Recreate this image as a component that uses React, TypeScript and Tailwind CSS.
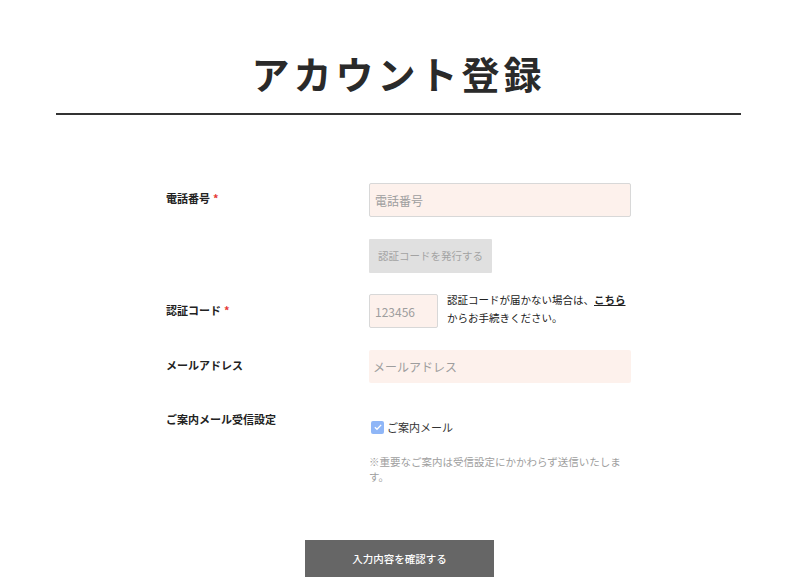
const jp = { fontFamily: '"Noto Sans CJK JP", "Noto Sans", sans-serif' };

export default function App() {
  return (
    <div className="w-[797px] bg-white text-[#222]" style={jp}>
      <h1 className="pt-[46px] text-center text-[38px] font-bold leading-[54px] tracking-[4px] text-[#2a2a2a]">
        アカウント登録
      </h1>
      <div className="mx-[56px] mt-[13px] h-[2px] bg-[#333]"></div>

      <div className="mx-auto mt-[68px] w-[465px]">
        {/* 電話番号 */}
        <div className="grid grid-cols-[203px_262px] items-center">
          <div className="-mt-[4px] text-[11px] font-bold leading-[18px]">
            電話番号<span className="ml-[3px] text-[#e53935]">*</span>
          </div>
          <input
            placeholder="電話番号"
            className="h-[34px] w-[262px] rounded-[2px] border border-[#d8d8d8] bg-[#fdf1ec] px-[5px] text-[12px] placeholder-[#9e9e9e] outline-none"
          />
        </div>

        <div className="mt-[22px] grid grid-cols-[203px_262px]">
          <div></div>
          <div>
            <button className="h-[34px] w-[123px] rounded-[1px] bg-[#e0e0e0] text-[10.5px] text-[#a3a3a3]">
              認証コードを発行する
            </button>
          </div>
        </div>

        {/* 認証コード */}
        <div className="mt-[21px] grid grid-cols-[203px_262px] items-center">
          <div className="-mt-[3px] text-[11px] font-bold leading-[18px]">
            認証コード<span className="ml-[3px] text-[#e53935]">*</span>
          </div>
          <div className="flex items-center gap-[9px]">
            <input
              placeholder="123456"
              className="h-[34px] w-[69px] shrink-0 rounded-[2px] border border-[#d8d8d8] bg-[#fdf1ec] px-[5px] text-[12px] placeholder-[#9e9e9e] outline-none"
            />
            <p className="-mt-[4px] whitespace-nowrap text-[10.5px] leading-[18px] text-[#222]">
              認証コードが届かない場合は、<span className="font-bold underline">こちら</span>
              <br />
              からお手続きください。
            </p>
          </div>
        </div>

        {/* メールアドレス */}
        <div className="mt-[22px] grid grid-cols-[203px_262px] items-center">
          <div className="-mt-[3px] text-[11px] font-bold leading-[18px]">メールアドレス</div>
          <input
            placeholder="メールアドレス"
            className="h-[33px] w-[262px] rounded-[2px] bg-[#fdf1ec] px-[4px] text-[12px] placeholder-[#9e9e9e] outline-none"
          />
        </div>

        {/* ご案内メール受信設定 */}
        <div className="mt-[27px] grid grid-cols-[203px_262px]">
          <div className="text-[11px] font-bold leading-[18px]">ご案内メール受信設定</div>
          <div className="pt-[8px]">
            <label className="flex items-center gap-[3px] pl-[2px] text-[11px] leading-[18px] text-[#333]">
              <span className="flex h-[13px] w-[13px] items-center justify-center rounded-[2px] bg-[#8fb6f7]">
                <svg viewBox="0 0 12 12" className="h-[10px] w-[10px]" fill="none" stroke="white" strokeWidth="1.6">
                  <path d="M2.2 6.2 L4.8 8.7 L9.8 3.4" />
                </svg>
              </span>
              ご案内メール
            </label>
            <p className="mt-[18px] text-[10.5px] leading-[15px] text-[#9e9e9e]">
              ※重要なご案内は受信設定にかかわらず送信いたします。
            </p>
          </div>
        </div>
      </div>

      <div className="mt-[56px] flex justify-center pb-[9px]">
        <button className="ml-[2px] h-[37px] w-[189px] bg-[#666] text-[10.5px] font-medium text-white">
          入力内容を確認する
        </button>
      </div>
    </div>
  );
}
